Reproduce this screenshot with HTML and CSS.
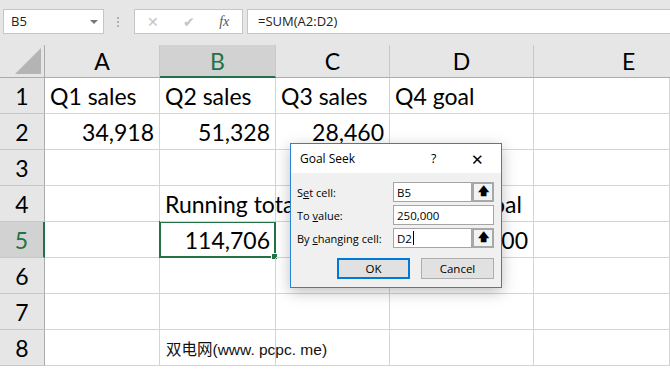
FILE: index.html
```html
<html>
<head>
    <meta charset="utf-8">
    <title>Goal Seek</title>
    <link rel="stylesheet" href="styles.css">
</head>
<body>
    <div class="toolbar">
        <div class="namebox">B5<span class="caret"></span></div>
        <div class="grip"></div>
        <div class="fbuttons">
            <span class="fb fb-x">&#x2715;</span>
            <span class="fb fb-ok">&#x2714;</span>
            <span class="fb fb-fx"><i>fx</i></span>
        </div>
        <div class="formula">=SUM(A2:D2)</div>
    </div>

    <div class="sheet">
        <div class="corner"><span class="tri"></span></div>
        <div class="colhead">A</div>
        <div class="colhead sel">B</div>
        <div class="colhead">C</div>
        <div class="colhead">D</div>
        <div class="colhead last">E</div>

        <div class="rowhead">1</div>
        <div class="cell">Q1 sales</div>
        <div class="cell">Q2 sales</div>
        <div class="cell">Q3 sales</div>
        <div class="cell">Q4 goal</div>
        <div class="cell"></div>

        <div class="rowhead">2</div>
        <div class="cell num">34,918</div>
        <div class="cell num">51,328</div>
        <div class="cell num">28,460</div>
        <div class="cell"></div>
        <div class="cell"></div>

        <div class="rowhead">3</div>
        <div class="cell"></div>
        <div class="cell"></div>
        <div class="cell"></div>
        <div class="cell"></div>
        <div class="cell"></div>

        <div class="rowhead">4</div>
        <div class="cell"></div>
        <div class="cell spill">Running total</div>
        <div class="cell"></div>
        <div class="cell">Needed goal</div>
        <div class="cell"></div>

        <div class="rowhead sel">5</div>
        <div class="cell"></div>
        <div class="cell num active">114,706<span class="handle"></span></div>
        <div class="cell"></div>
        <div class="cell num">250,000</div>
        <div class="cell"></div>

        <div class="rowhead">6</div>
        <div class="cell"></div>
        <div class="cell"></div>
        <div class="cell"></div>
        <div class="cell"></div>
        <div class="cell"></div>

        <div class="rowhead">7</div>
        <div class="cell"></div>
        <div class="cell"></div>
        <div class="cell"></div>
        <div class="cell"></div>
        <div class="cell"></div>

        <div class="rowhead">8</div>
        <div class="cell"></div>
        <div class="cell spill watermark">双电网(www. pcpc. me)</div>
        <div class="cell"></div>
        <div class="cell"></div>
        <div class="cell"></div>
    </div>

    <div class="dialog">
        <div class="dlg-title">
            <span class="dlg-name">Goal Seek</span>
            <span class="dlg-help">?</span>
            <span class="dlg-close">&#x2715;</span>
        </div>
        <div class="dlg-body">
            <div class="field">
                <label>S<u>e</u>t cell:</label>
                <div class="refbox">
                    <div class="input">B5</div>
                    <span class="pick">&#x1F845;</span>
                </div>
            </div>
            <div class="field">
                <label>To <u>v</u>alue:</label>
                <div class="input wide">250,000</div>
            </div>
            <div class="field">
                <label>By <u>c</u>hanging cell:</label>
                <div class="refbox">
                    <div class="input">D2<span class="cursor"></span></div>
                    <span class="pick">&#x1F845;</span>
                </div>
            </div>
            <div class="buttons">
                <div class="btn btn-default">OK</div>
                <div class="btn">Cancel</div>
            </div>
        </div>
    </div>
</body>
</html>
```

FILE: styles.css
```css
* {
    box-sizing: border-box;
}

body {
    margin: 0;
    width: 670px;
    height: 369px;
    overflow: hidden;
    background-color: #ffffff;
    font-family: "Lato", "Noto Sans", sans-serif;
    color: #000000;
}

/* formula bar */

.toolbar {
    display: flex;
    align-items: center;
    height: 45px;
    padding: 0 0 2px 3px;
    background-color: #e6e6e6;
}

.namebox {
    position: relative;
    width: 101px;
    height: 25px;
    padding: 2px 0 0 7px;
    background-color: #ffffff;
    border: 1px solid #c6c6c6;
    font-family: "Open Sans", sans-serif;
    font-size: 13px;
    color: #222222;
}

.caret {
    position: absolute;
    right: 5px;
    top: 10px;
    border-left: 4px solid transparent;
    border-right: 4px solid transparent;
    border-top: 4px solid #777777;
}

.grip {
    width: 2px;
    height: 10px;
    margin: 0 15px 0 13px;
    border-left: 2px dotted #b0b0b0;
}

.fbuttons {
    display: flex;
    align-items: center;
    width: 109px;
    height: 25px;
    background-color: #ffffff;
    border: 1px solid #c6c6c6;
}

.fb {
    width: 36px;
    text-align: center;
    color: #c4c4c4;
    font-size: 14px;
}

.fb-fx {
    color: #555555;
    font-family: "Liberation Serif", serif;
    font-size: 14px;
}

.formula {
    flex: 1;
    height: 25px;
    margin-left: 4px;
    padding: 2px 0 0 10px;
    background-color: #ffffff;
    border: 1px solid #c6c6c6;
    border-right: none;
    font-family: "Open Sans", sans-serif;
    font-size: 13px;
    color: #222222;
}

/* grid */

.sheet {
    display: grid;
    grid-template-columns: 45px 115px 116px 114px 144px 136px;
    grid-template-rows: 33px repeat(8, 36px);
}

.corner {
    position: relative;
    background-color: #e6e6e6;
    border-right: 1px solid #ababab;
    border-bottom: 1px solid #ababab;
}

.tri {
    position: absolute;
    right: 3px;
    bottom: 3px;
    width: 0;
    height: 0;
    border-left: 26px solid transparent;
    border-bottom: 26px solid #b4b4b4;
}

.colhead {
    display: flex;
    align-items: center;
    justify-content: center;
    background-color: #e6e6e6;
    border-right: 1px solid #c8c8c8;
    border-bottom: 1px solid #ababab;
    font-size: 23px;
    color: #000000;
}

.colhead.last {
    justify-content: flex-start;
    padding-left: 88px;
    border-right: none;
}

.colhead.sel {
    background-color: #d2d2d2;
    border-bottom: 2px solid #217346;
    color: #217346;
}

.rowhead {
    display: flex;
    align-items: center;
    justify-content: center;
    background-color: #e6e6e6;
    border-right: 1px solid #ababab;
    border-bottom: 1px solid #c8c8c8;
    font-size: 23px;
}

.rowhead.sel {
    background-color: #d2d2d2;
    border-right: 2px solid #217346;
    color: #217346;
}

.cell {
    position: relative;
    display: flex;
    align-items: center;
    padding: 0 5px;
    border-right: 1px solid #d4d4d4;
    border-bottom: 1px solid #d4d4d4;
    font-size: 23px;
    white-space: nowrap;
}

.cell.num {
    justify-content: flex-end;
}

.cell.spill {
    overflow: visible;
    z-index: 1;
}

.cell.active {
    border: 2px solid #217346;
    margin: -1px 0 0 -1px;
    padding-right: 4px;
}

.handle {
    position: absolute;
    right: -4px;
    bottom: -4px;
    width: 7px;
    height: 7px;
    background-color: #217346;
    border: 1px solid #ffffff;
}

.watermark {
    font-family: "Liberation Sans", "Noto Sans CJK SC", sans-serif;
    font-size: 15.5px;
    color: #111111;
    padding-left: 6px;
}

/* goal seek dialog */

.dialog {
    position: absolute;
    z-index: 2;
    left: 290px;
    top: 143px;
    width: 212px;
    height: 145px;
    border: 1px solid #2b83d6;
    background-color: #f0f0f0;
    box-shadow: 0 4px 14px rgba(0, 0, 0, 0.25);
    font-family: "Open Sans", "Noto Sans", sans-serif;
    font-size: 11px;
    color: #000000;
}

.dlg-title {
    display: flex;
    align-items: center;
    height: 29px;
    padding-left: 9px;
    background-color: #ffffff;
    font-size: 12px;
}

.dlg-name {
    flex: 1;
}

.dlg-help {
    width: 40px;
    font-size: 12.5px;
}

.dlg-close {
    width: 30px;
    font-size: 15px;
}

.dlg-body {
    padding: 9px 7px 0 6px;
}

.field {
    display: flex;
    align-items: center;
    justify-content: space-between;
    margin-bottom: 3px;
}

.field label {
    padding-top: 1px;
}

.refbox {
    display: flex;
    width: 101px;
    height: 20px;
}

.input {
    display: flex;
    align-items: center;
    flex: 1;
    height: 20px;
    padding-left: 3px;
    background-color: #ffffff;
    border: 1px solid #a5a5a5;
    font-size: 11.5px;
}

.input.wide {
    flex: none;
    width: 101px;
}

.pick {
    width: 22px;
    height: 20px;
    display: flex;
    align-items: center;
    justify-content: center;
    border: 2px solid #a8a8a8;
    background-color: #f3f3f3;
    font-family: "DejaVu Sans", sans-serif;
    font-size: 11px;
    font-weight: bold;
}

.cursor {
    width: 1px;
    height: 14px;
    margin-left: 1px;
    background-color: #000000;
}

.buttons {
    display: flex;
    justify-content: flex-end;
    gap: 11px;
    margin-top: 10px;
}

.btn {
    width: 73px;
    height: 21px;
    display: flex;
    align-items: center;
    justify-content: center;
    background-color: #e1e1e1;
    border: 1px solid #adadad;
    font-size: 11.5px;
}

.btn-default {
    border: 2px solid #0078d7;
}
```
